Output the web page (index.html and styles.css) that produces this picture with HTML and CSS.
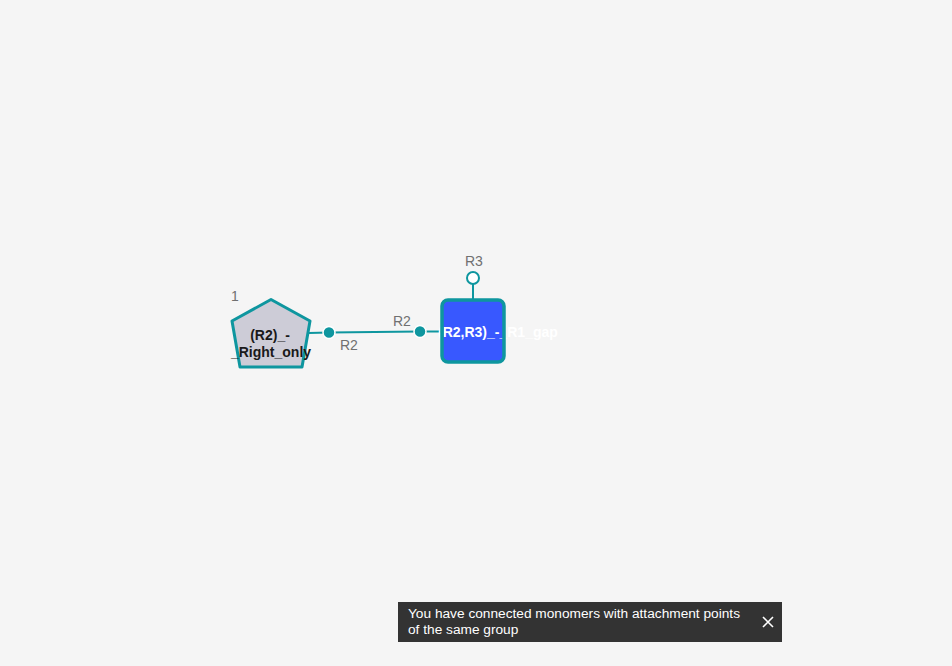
FILE: index.html
```html
<!DOCTYPE html>
<html>
<head>
<meta charset="utf-8">
<link rel="stylesheet" href="styles.css">
</head>
<body>
<div class="canvas">
  <svg class="diagram" width="952" height="666" viewBox="0 0 952 666">
    <text class="apl" x="231" y="301">1</text>
    <!-- bonds -->
    <line class="bond" x1="309" y1="333" x2="329" y2="332.5"/>
    <line class="bond" x1="329" y1="332.5" x2="420" y2="331.5"/>
    <line class="bond" x1="420" y1="331.5" x2="442" y2="331.5"/>
    <line class="bond" x1="473" y1="284" x2="473" y2="300"/>
    <!-- pentagon -->
    <polygon class="peptide" points="271,299.5 310,321 302,367 240,367 232,321"/>
    <text class="mlabel dark" x="270" y="340" text-anchor="middle">(R2)_-</text>
    <text class="mlabel dark" x="271" y="357" text-anchor="middle">_Right_only</text>
    <!-- square -->
    <rect class="chem" x="442" y="300" width="62" height="62" rx="6" ry="6"/>
    <text class="mlabel light" x="438" y="337">(R2,R3)_-_R1_gap</text>
    <rect class="chem-border" x="442" y="300" width="62" height="62" rx="6" ry="6"/>
    <!-- attachment points -->
    <circle class="ap" cx="329" cy="332.5" r="6"/>
    <circle class="ap" cx="420" cy="331.5" r="6"/>
    <circle class="ap-open" cx="473" cy="278" r="6"/>
    <text class="apl" x="340" y="350">R2</text>
    <text class="apl" x="393" y="326">R2</text>
    <text class="apl" x="465" y="266">R3</text>
  </svg>
  <div class="toast">
    <div class="toast-text">You have connected monomers with attachment points<br>of the same group</div>
    <svg class="toast-close" width="12" height="12" viewBox="0 0 12 12">
      <path d="M1 1 L11 11 M11 1 L1 11" stroke="#ffffff" stroke-width="1.6" fill="none"/>
    </svg>
  </div>
</div>
</body>
</html>
```
FILE: styles.css
```css
html, body {
  margin: 0;
  padding: 0;
  background: #f5f5f5;
  font-family: "Liberation Sans", Arial, sans-serif;
}
.canvas {
  position: relative;
  width: 952px;
  height: 666px;
  overflow: hidden;
}
.diagram {
  display: block;
}
.bond {
  stroke: #0e969f;
  stroke-width: 2;
}
.peptide {
  fill: #cdccd7;
  stroke: #0e969f;
  stroke-width: 3;
  stroke-linejoin: round;
}
.chem {
  fill: #3858ff;
}
.chem-border {
  fill: none;
  stroke: #0e969f;
  stroke-width: 3.5;
}
.mlabel {
  font-family: "Liberation Sans", Arial, sans-serif;
  font-weight: bold;
  font-size: 14px;
}
.mlabel.dark {
  fill: #1a1a1a;
}
.mlabel.light {
  fill: #ffffff;
}
.ap {
  fill: #0e969f;
  stroke: #ffffff;
  stroke-width: 1.5;
}
.ap-open {
  fill: #ffffff;
  stroke: #0e969f;
  stroke-width: 2;
}
.apl {
  font-family: "Liberation Sans", Arial, sans-serif;
  font-size: 14px;
  fill: #707070;
}
.toast {
  position: absolute;
  left: 398px;
  top: 602px;
  width: 384px;
  height: 40px;
  box-sizing: border-box;
  background: #333333;
  display: flex;
  align-items: center;
  justify-content: space-between;
  padding: 0 8px 0 10px;
}
.toast-text {
  color: #ffffff;
  font-family: "Liberation Sans", Arial, sans-serif;
  font-size: 13.7px;
  line-height: 16px;
}
.toast-close {
  display: block;
}
```
